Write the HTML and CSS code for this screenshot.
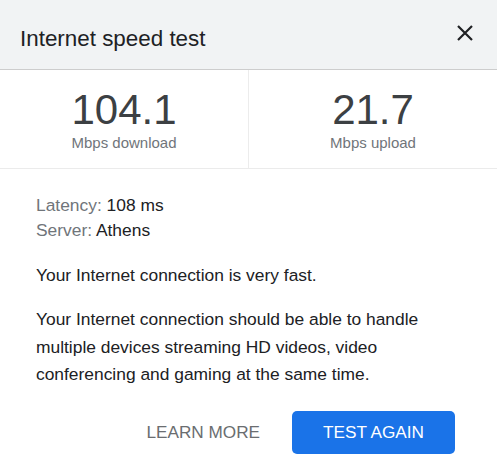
FILE: index.html
```html
<!DOCTYPE html>
<html lang="en">
<head>
<meta charset="utf-8">
<title>Internet speed test</title>
<link rel="stylesheet" href="styles.css">
</head>
<body>
<div class="dialog">
  <header class="dialog-header">
    <h1 class="dialog-title">Internet speed test</h1>
    <button class="close-btn" aria-label="Close">
      <svg viewBox="0 0 18 18" width="18" height="18" aria-hidden="true">
        <path d="M2 2 L16 16 M16 2 L2 16" stroke="#202124" stroke-width="2.2" stroke-linecap="butt" fill="none"/>
      </svg>
    </button>
  </header>
  <section class="stats">
    <div class="stat">
      <div class="stat-value">104.1</div>
      <div class="stat-unit">Mbps download</div>
    </div>
    <div class="stat">
      <div class="stat-value">21.7</div>
      <div class="stat-unit">Mbps upload</div>
    </div>
  </section>
  <section class="content">
    <div class="meta">
      <div><span class="meta-label">Latency:</span> 108 ms</div>
      <div><span class="meta-label">Server:</span> Athens</div>
    </div>
    <p class="summary">Your Internet connection is very fast.</p>
    <p class="details">Your Internet connection should be able to handle multiple devices streaming HD videos, video conferencing and gaming at the same time.</p>
    <div class="actions">
      <button class="btn btn-text">LEARN MORE</button>
      <button class="btn btn-primary">TEST AGAIN</button>
    </div>
  </section>
</div>
</body>
</html>
```

FILE: styles.css
```css
* { box-sizing: border-box; }

html, body {
  margin: 0;
  padding: 0;
  background: #ffffff;
}

body {
  font-family: Arial, "Liberation Sans", sans-serif;
  color: #202124;
}

.dialog {
  width: 497px;
}

.dialog-header {
  display: flex;
  justify-content: space-between;
  align-items: flex-start;
  height: 70px;
  padding: 0 23px 0 20px;
  background: #f1f3f4;
  border-bottom: 1px solid #cdcdcd;
}

.dialog-title {
  margin: 26px 0 0;
  font-size: 22.4px;
  line-height: 26px;
  font-weight: normal;
  color: #202124;
}

.close-btn {
  margin-top: 24px;
  width: 18px;
  height: 18px;
  padding: 0;
  border: 0;
  background: transparent;
  display: flex;
}

.stats {
  display: grid;
  grid-template-columns: 248px 1fr;
  border-bottom: 1px solid #ebebeb;
}

.stat {
  display: flex;
  flex-direction: column;
  align-items: center;
  padding: 20px 0 16px;
}

.stat + .stat {
  border-left: 1px solid #ececec;
}

.stat-value {
  font-size: 42px;
  line-height: 40px;
  color: #3c4043;
}

.stat-unit {
  margin-top: 4px;
  font-size: 15px;
  line-height: 18px;
  color: #70757a;
}

.content {
  padding: 24px 42px 0 36px;
  font-size: 17.4px;
}

.meta {
  line-height: 25px;
}

.meta-label {
  color: #70757a;
}

.summary {
  margin: 20px 0 0;
  line-height: 25px;
}

.details {
  margin: 18px 0 0;
  line-height: 27.5px;
}

.actions {
  display: flex;
  justify-content: flex-end;
  align-items: center;
  margin-top: 22px;
}

.btn {
  font-family: Arial, "Liberation Sans", sans-serif;
  font-size: 17.2px;
  height: 43px;
  border: 0;
  border-radius: 5px;
  cursor: pointer;
}

.btn-text {
  background: transparent;
  color: #6a6d70;
  padding: 0;
  margin-right: 32px;
}

.btn-primary {
  background: #1a73e8;
  color: #ffffff;
  padding: 0 31px;
}
```
